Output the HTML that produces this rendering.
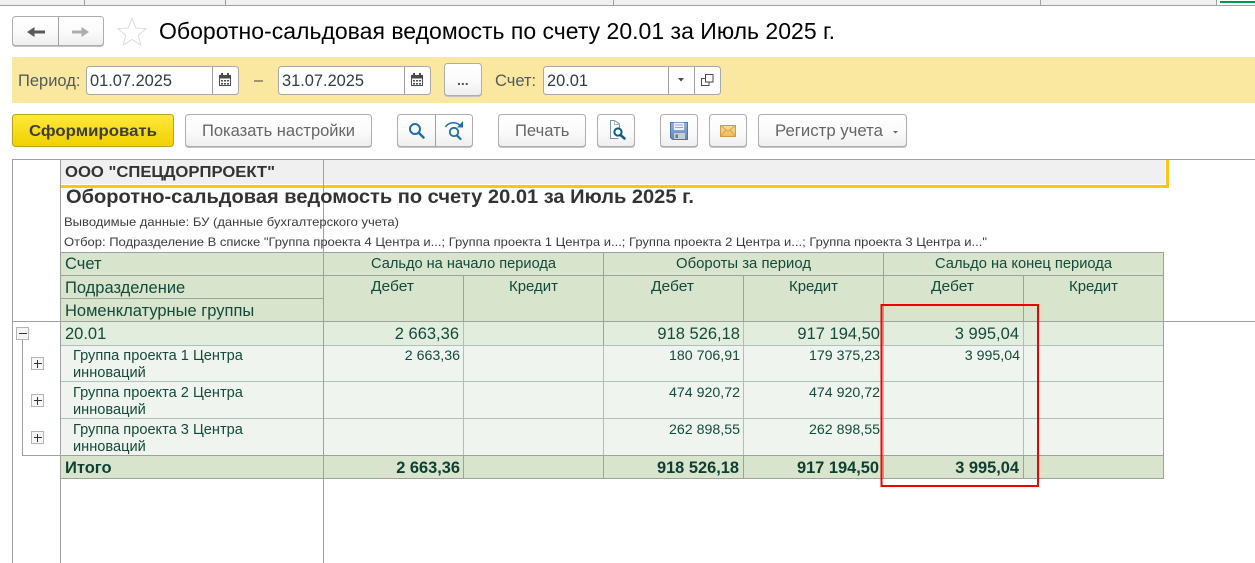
<!DOCTYPE html>
<html lang="ru"><head><meta charset="utf-8"><title>Оборотно-сальдовая ведомость</title>
<style>
html,body{margin:0;padding:0;background:#fff;width:1255px;height:563px;overflow:hidden}
svg{display:block;position:absolute;left:0;top:0}
text{font-family:"Liberation Sans",sans-serif;white-space:pre}
.l{font-size:16.500px;fill:#4f5b5b}
.i{font-size:16.400px;fill:#2f3d45}
.b{font-size:16.600px;fill:#666}
.h{font-size:16.500px;fill:#124a3d}
.v{font-size:16.500px;fill:#124a3d;text-anchor:end}
.g{font-size:14.600px;fill:#124a3d}
.s{font-size:14.200px;fill:#124a3d;text-anchor:end}
.c{font-size:14.700px;fill:#124a3d;text-anchor:middle}
.t{font-size:16.400px;font-weight:bold;fill:#0c3f33;text-anchor:end}
.n{font-size:12px;fill:#3a3a3a}
.btn{fill:url(#bg);stroke:#adadad;stroke-width:1;filter:drop-shadow(0 1px 0 #c4c4c4)}
.inp{fill:#fff;stroke:#a8a8a8;stroke-width:1}
.d,.gl{fill:none;stroke:#a0a0a0;stroke-width:1;shape-rendering:crispEdges}
.gg{fill:none;stroke:#aac3b6;stroke-width:1;shape-rendering:crispEdges}
</style></head><body>
<svg width="1255" height="563" viewBox="0 0 1255 563" xmlns="http://www.w3.org/2000/svg">
<defs>
<linearGradient id="bg" x1="0" y1="0" x2="0" y2="1"><stop offset="0" stop-color="#ffffff"/><stop offset=".5" stop-color="#fbfbfb"/><stop offset="1" stop-color="#eeeeee"/></linearGradient>
<linearGradient id="by" x1="0" y1="0" x2="0" y2="1"><stop offset="0" stop-color="#ffe93c"/><stop offset="1" stop-color="#f0d000"/></linearGradient>
<linearGradient id="fl" x1="0" y1="0" x2="0" y2="1"><stop offset="0" stop-color="#8fb4dc"/><stop offset="1" stop-color="#5c88bd"/></linearGradient>
<linearGradient id="ml" x1="0" y1="0" x2="0" y2="1"><stop offset="0" stop-color="#f8dc96"/><stop offset="1" stop-color="#eeb95c"/></linearGradient>
</defs>

<!-- top strip -->
<rect x="0" y="0" width="1255" height="5" fill="#f0f0f0"/>
<rect x="0" y="5" width="1255" height="1" fill="#a0a0a0"/>
<path class="d" d="M84.500 0V5M225.500 0V5M613.500 0V5M1040.500 0V5M1216.500 0V5"/>
<rect x="1217" y="0" width="38" height="5" fill="#fff"/>
<rect x="1220" y="1" width="35" height="2" fill="#00994d"/>

<!-- nav buttons -->
<rect class="btn" x="12.500" y="16.500" width="91" height="29" rx="3"/>
<path class="d" d="M58.500 17V45"/>
<path d="M27 32l7.500-5v3.500H45v3H34.500V37z" fill="#595959"/>
<path d="M89 32l-7.500-5v3.500H72v3h9.500V37z" fill="#adadad"/>
<path d="M132 18.500l3.900 9.400 10.100.7-7.700 6.500 2.500 9.800-8.800-5.400-8.800 5.400 2.500-9.800-7.700-6.500 10.100-.7z" fill="#fff" stroke="#d6d8da" stroke-width=".9"/>
<text x="159" y="39" font-size="23" fill="#000" textLength="676" lengthAdjust="spacingAndGlyphs">Оборотно-сальдовая ведомость по счету 20.01 за Июль 2025 г.</text>

<!-- yellow bar -->
<rect x="12" y="57" width="1243" height="46" fill="#fbe8a0"/>
<text class="l" x="18" y="86">Период:</text>
<rect class="inp" x="86.500" y="66.500" width="152" height="28" rx="3"/>
<path class="d" d="M212.500 67V94"/>
<text class="i" x="90" y="86">01.07.2025</text>
<g fill="#4a4a4a">
<path d="M219 75h12v11h-12z M220 78.500v6.500h10v-6.500z" fill-rule="evenodd"/><rect x="221" y="73" width="2" height="4"/><rect x="227" y="73" width="2" height="4"/>
<path d="M221 80h2v1.500h-2zM224 80h2v1.500h-2zM227 80h2v1.500h-2zM221 83h2v1.500h-2zM224 83h2v1.500h-2zM227 83h2v1.500h-2z"/>
</g>
<path d="M254 81h9" stroke="#444" stroke-width="1" shape-rendering="crispEdges"/>
<rect class="inp" x="278.500" y="66.500" width="152" height="28" rx="3"/>
<path class="d" d="M404.500 67V94"/>
<text class="i" x="282" y="86">31.07.2025</text>
<g fill="#4a4a4a" transform="translate(192 0)">
<path d="M219 75h12v11h-12z M220 78.500v6.500h10v-6.500z" fill-rule="evenodd"/><rect x="221" y="73" width="2" height="4"/><rect x="227" y="73" width="2" height="4"/>
<path d="M221 80h2v1.500h-2zM224 80h2v1.500h-2zM227 80h2v1.500h-2zM221 83h2v1.500h-2zM224 83h2v1.500h-2zM227 83h2v1.500h-2z"/>
</g>
<rect class="btn" x="444.500" y="63.500" width="37" height="32" rx="3"/>
<text x="457" y="85" font-size="14" font-weight="bold" fill="#555">...</text>
<text class="l" x="495" y="86">Счет:</text>
<rect class="inp" x="543.500" y="66.500" width="177" height="28" rx="3"/>
<path class="d" d="M668.500 67V94M694.500 67V94"/>
<text class="i" x="547" y="86">20.01</text>
<path d="M678 78h6l-3 3.500z" fill="#4a4a4a"/>
<path d="M705 78.500h-3.500v7h7.500v-3.500M705.500 74.500h7.500v7.500h-7.500z" fill="none" stroke="#4a4a4a" stroke-width="1"/>

<!-- toolbar -->
<rect x="12.500" y="114.500" width="161" height="32" rx="3" fill="url(#by)" stroke="#bfa21c"/>
<text x="29" y="136" font-size="16" font-weight="bold" fill="#3f3f33" textLength="128" lengthAdjust="spacingAndGlyphs">Сформировать</text>
<rect class="btn" x="185.500" y="114.500" width="186" height="32" rx="3"/>
<text class="b" x="202" y="136" textLength="153" lengthAdjust="spacingAndGlyphs">Показать настройки</text>
<rect class="btn" x="397.500" y="114.500" width="75" height="32" rx="3"/>
<path class="d" d="M435.500 115V146"/>
<circle cx="415" cy="129" r="5" fill="none" stroke="#1f6ea6" stroke-width="2"/>
<path d="M419 133l4.500 4.500" stroke="#1f6ea6" stroke-width="2.500" stroke-linecap="round"/>
<path d="M445.500 127c3-5 11-6 15-1" fill="none" stroke="#1f6ea6" stroke-width="1.500"/>
<path d="M463 121v6.500h-6z" fill="#1f6ea6"/>
<circle cx="454" cy="132" r="4.200" fill="none" stroke="#1f6ea6" stroke-width="1.800"/>
<path d="M457 135.500l3.500 3.500" stroke="#1f6ea6" stroke-width="2.200" stroke-linecap="round"/>
<rect class="btn" x="498.500" y="114.500" width="87" height="32" rx="3"/>
<text class="b" x="515" y="136">Печать</text>
<rect class="btn" x="597.500" y="114.500" width="37" height="32" rx="3"/>
<path d="M619.500 134V124l-5-3.500h-4v18h8" fill="#fff" stroke="#7a93a6" stroke-width="1"/>
<path d="M614.500 120.500v4h5" fill="none" stroke="#a8b8c4" stroke-width="1"/>
<circle cx="618" cy="132" r="3.600" fill="#fff" stroke="#0e5a85" stroke-width="2"/>
<path d="M620.500 135l4 3.500" stroke="#0e5a85" stroke-width="2.500" stroke-linecap="round"/>
<rect class="btn" x="660.500" y="114.500" width="37" height="32" rx="3"/>
<path d="M670.500 122.500h17v17h-15l-2-2z" fill="url(#fl)" stroke="#4a75a8" stroke-width="1"/>
<rect x="673.500" y="122.500" width="11" height="8" fill="#eef3f8" stroke="#6c93c2" stroke-width=".6"/>
<path d="M675 125h8M675 127.500h8" stroke="#8aa8cc" stroke-width="1"/>
<rect x="674" y="133" width="11" height="6" fill="#c9ccd0"/>
<rect x="675.500" y="134.500" width="2.500" height="3.500" fill="#5f7b9c"/>
<rect class="btn" x="709.500" y="114.500" width="37" height="32" rx="3"/>
<rect x="720.500" y="125.500" width="15" height="11" fill="url(#ml)" stroke="#d09a45"/>
<path d="M720.500 125.500l7.500 6 7.500-6M720.500 136.500l5.500-6.500M735.500 136.500l-5.500-6.500" fill="none" stroke="#d9a650" stroke-width="1"/>
<rect class="btn" x="758.500" y="114.500" width="148" height="32" rx="3"/>
<text class="b" x="775" y="136" textLength="108" lengthAdjust="spacingAndGlyphs">Регистр учета</text>
<path d="M893 131h5l-2.500 2.500z" fill="#666"/>

<!-- report area -->
<rect x="61" y="160" width="1105" height="25" fill="#f0f0f0"/>
<rect x="61" y="185" width="1108" height="3" fill="#fac814"/>
<rect x="1166" y="160" width="3" height="28" fill="#fac814"/>
<rect x="1165" y="160" width="1" height="25" fill="#fff"/>
<rect x="61" y="184" width="1105" height="1" fill="#fff"/>

<!-- table fills -->
<rect x="60" y="252" width="1104" height="69" fill="#d8e4cc"/>
<rect x="60" y="321" width="1104" height="24" fill="#e3eddd"/>
<rect x="60" y="345" width="1104" height="110" fill="#eff4ee"/>
<rect x="60" y="455" width="1104" height="23" fill="#d8e4cc"/>

<!-- table lines -->
<path class="gg" d="M60 345.500H1164M60 381.500H1164M60 418.500H1164"/>
<path class="gg" d="M463.500 345V455M603.500 345V455M743.500 345V455M883.500 345V455M1023.500 345V455"/>
<path class="gg" d="M463.500 321V345M743.500 321V345M1023.500 321V345"/>
<path class="gl" d="M60 252.500H1164M323 275.500H1164M60 275.500H323M60 298.500H323M60 455.500H1164M60 478.500H1164"/>
<path class="gl" d="M603.500 252V345M883.500 252V345M463.500 275V321M743.500 275V321M1023.500 275V321M1163.500 252V478M463.500 455V478M603.500 455V478M743.500 455V478M883.500 455V478M1023.500 455V478"/>
<path class="gl" d="M12 159.500H1255M12.500 159V563M60.500 159V563M323.500 159V563M12 321.500H1255"/>

<!-- tree -->
<path class="gl" d="M22.500 340V455.500H60"/>
<rect x="16.500" y="327.500" width="12" height="12" fill="#f4f4f4" stroke="#b4b4b4"/>
<path d="M19 333.500h8" stroke="#333" stroke-width="1" shape-rendering="crispEdges"/>
<g fill="#f7f7f7" stroke="#b4b4b4" shape-rendering="crispEdges">
<rect x="31.500" y="357.500" width="12" height="12"/><rect x="31.500" y="394.500" width="12" height="12"/><rect x="31.500" y="431.500" width="12" height="12"/>
</g>
<path d="M34 363.500h8M37.500 360v8M34 400.500h8M37.500 397v8M34 437.500h8M37.500 434v8" stroke="#333" stroke-width="1" shape-rendering="crispEdges" fill="none"/>

<!-- report text -->
<text x="65" y="177" font-size="16" font-weight="bold" fill="#333" textLength="210" lengthAdjust="spacingAndGlyphs">ООО "СПЕЦДОРПРОЕКТ"</text>
<text x="66" y="203" font-size="19" font-weight="bold" fill="#333" textLength="628" lengthAdjust="spacingAndGlyphs">Оборотно-сальдовая ведомость по счету 20.01 за Июль 2025 г.</text>
<text class="n" x="64" y="226" textLength="335" lengthAdjust="spacingAndGlyphs">Выводимые данные: БУ (данные бухгалтерского учета)</text>
<text class="n" x="64" y="246" textLength="923" lengthAdjust="spacingAndGlyphs">Отбор: Подразделение В списке "Группа проекта 4 Центра и...; Группа проекта 1 Центра и...; Группа проекта 2 Центра и...; Группа проекта 3 Центра и..."</text>

<text class="h" x="65" y="269">Счет</text>
<text class="h" x="65" y="293">Подразделение</text>
<text class="h" x="65" y="316">Номенклатурные группы</text>
<text class="c" x="463.500" y="268" textLength="185" lengthAdjust="spacingAndGlyphs">Сальдо на начало периода</text>
<text class="c" x="743.500" y="268" textLength="135" lengthAdjust="spacingAndGlyphs">Обороты за период</text>
<text class="c" x="1023.500" y="268" textLength="177" lengthAdjust="spacingAndGlyphs">Сальдо на конец периода</text>
<text class="c" x="392.500" y="291" textLength="43" lengthAdjust="spacingAndGlyphs">Дебет</text><text class="c" x="533.500" y="291" textLength="49" lengthAdjust="spacingAndGlyphs">Кредит</text>
<text class="c" x="672.500" y="291" textLength="43" lengthAdjust="spacingAndGlyphs">Дебет</text><text class="c" x="813.500" y="291" textLength="49" lengthAdjust="spacingAndGlyphs">Кредит</text>
<text class="c" x="952.500" y="291" textLength="43" lengthAdjust="spacingAndGlyphs">Дебет</text><text class="c" x="1093.500" y="291" textLength="49" lengthAdjust="spacingAndGlyphs">Кредит</text>

<text class="h" x="65" y="339">20.01</text>
<text class="v" x="459" y="339">2 663,36</text>
<text class="v" x="740" y="339">918 526,18</text>
<text class="v" x="880" y="339">917 194,50</text>
<text class="v" x="1019" y="339">3 995,04</text>

<text class="g" x="73" y="360">Группа проекта 1 Центра</text><text class="g" x="73" y="377">инноваций</text>
<text class="s" x="460" y="360">2 663,36</text><text class="s" x="740" y="360">180 706,91</text><text class="s" x="880" y="360">179 375,23</text><text class="s" x="1020" y="360">3 995,04</text>
<text class="g" x="73" y="397">Группа проекта 2 Центра</text><text class="g" x="73" y="414">инноваций</text>
<text class="s" x="740" y="397">474 920,72</text><text class="s" x="880" y="397">474 920,72</text>
<text class="g" x="73" y="434">Группа проекта 3 Центра</text><text class="g" x="73" y="451">инноваций</text>
<text class="s" x="740" y="434">262 898,55</text><text class="s" x="880" y="434">262 898,55</text>

<text x="65" y="473" font-size="16.500" font-weight="bold" fill="#0c3f33">Итого</text>
<text class="t" x="460" y="473">2 663,36</text>
<text class="t" x="739" y="473">918 526,18</text>
<text class="t" x="879" y="473">917 194,50</text>
<text class="t" x="1019" y="473">3 995,04</text>

<!-- red annotation -->
<rect x="881.500" y="305" width="156.500" height="181" fill="none" stroke="#f00000" stroke-width="2"/>
</svg>
</body></html>
